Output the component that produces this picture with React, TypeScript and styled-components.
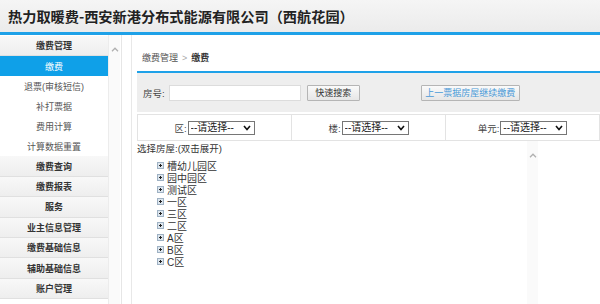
import styled, { createGlobalStyle } from 'styled-components'

const GlobalStyle = createGlobalStyle`
  html, body {
    margin: 0;
    padding: 0;
    background: #fff;
  }
  body {
    font-family: "Liberation Sans", "Noto Sans CJK SC", sans-serif;
    color: #333;
  }
`

const Page = styled.div`
  width: 600px;
  height: 304px;
  overflow: hidden;
  display: flex;
  flex-direction: column;
`

const TopBar = styled.header`
  height: 32px;
  flex: none;
  display: flex;
  align-items: center;
  padding-left: 8px;
  background: linear-gradient(#f5f5f5, #ebebeb);
  border-bottom: 3px solid #1ea1e8;
`

const Title = styled.h1`
  margin: 0;
  font-size: 14.2px;
  font-weight: bold;
  color: #222;
  font-family: "Noto Sans CJK SC", sans-serif;
`

const Body = styled.div`
  flex: 1;
  display: flex;
  min-height: 0;
`

const Side = styled.aside`
  width: 121px;
  flex: none;
  display: flex;
  border-right: 1px solid #e6e6e6;
`

const Menu = styled.nav`
  width: 108px;
  display: flex;
  flex-direction: column;
  padding-top: 1px;
  border-right: 1px solid #ececec;
`

const GroupHead = styled.div`
  height: 20.4px;
  flex: none;
  box-sizing: border-box;
  display: flex;
  align-items: center;
  justify-content: center;
  font-size: 9px;
  font-weight: bold;
  color: #333;
  background: linear-gradient(#f8f8f8, #eeeeee);
  border-bottom: 1px solid #e0e0e0;
`

const MenuItem = styled.div<{ $active?: boolean }>`
  height: 20px;
  flex: none;
  display: flex;
  align-items: center;
  justify-content: center;
  font-size: 9px;
  color: ${p => (p.$active ? '#fff' : '#555')};
  background: ${p => (p.$active ? '#0fa0e8' : '#fff')};
`

const Track = styled.div<{ $top: number }>`
  width: 11px;
  flex: none;
  background: #fafafa;
  display: flex;
  justify-content: center;
  padding-top: ${p => p.$top}px;
  box-sizing: border-box;
`

const Main = styled.main`
  flex: 1;
  min-width: 0;
  margin-left: 9px;
  border-left: 1px solid #e8e8e8;
  padding-left: 5px;
  display: flex;
  flex-direction: column;
`

const Crumb = styled.div`
  height: 36px;
  flex: none;
  display: flex;
  align-items: flex-end;
  padding: 0 0 7px 5px;
  box-sizing: border-box;
  font-size: 9px;
  line-height: 12px;
  color: #555;
  gap: 4px;
`

const CrumbSep = styled.span`
  color: #aaa;
`

const CrumbNow = styled.b`
  color: #333;
`

const BlueRule = styled.div`
  height: 2px;
  flex: none;
  background: #1ea1e8;
`

const SearchBar = styled.div`
  height: 39px;
  flex: none;
  display: flex;
  align-items: center;
  padding-left: 6px;
  background: #eeeeee;
  font-size: 9.5px;
  color: #444;
`

const TextInput = styled.input`
  width: 132px;
  height: 16px;
  box-sizing: border-box;
  margin-left: 4px;
  border: 1px solid #dcdcdc;
  background: #fff;
  padding: 0 3px;
  outline: none;
`

const Btn = styled.button<{ $w: number; $gap: number; $blue?: boolean }>`
  width: ${p => p.$w}px;
  height: 16px;
  margin-left: ${p => p.$gap}px;
  padding: 0;
  border: 1px solid #b5b5b5;
  border-radius: 1px;
  background: linear-gradient(#fafafa, #e6e6e6);
  font-family: inherit;
  font-size: 9px;
  color: ${p => (p.$blue ? '#4a9ad8' : '#333')};
`

const Filters = styled.div`
  height: 27px;
  flex: none;
  margin-top: 2px;
  display: grid;
  grid-template-columns: 154px 154px 1fr;
  border: 1px solid #e3e3e3;
  box-sizing: border-box;
`

const FilterCell = styled.div<{ $last?: boolean }>`
  display: flex;
  align-items: center;
  justify-content: center;
  gap: 1px;
  font-size: 9.5px;
  color: #444;
  border-right: ${p => (p.$last ? 'none' : '1px solid #e3e3e3')};
`

const SelectBox = styled.div`
  position: relative;
  width: 67px;
  height: 14px;
`

const Select = styled.select`
  appearance: none;
  width: 100%;
  height: 100%;
  box-sizing: border-box;
  border: 1px solid #767676;
  border-radius: 0;
  background: #fff;
  padding: 0 0 0 2px;
  font-family: inherit;
  font-size: 10px;
  line-height: 12px;
  color: #222;
`

const Caret = styled.svg`
  position: absolute;
  right: 4px;
  top: 4px;
  pointer-events: none;
`

const TreeArea = styled.div`
  flex: 1;
  min-height: 0;
  display: flex;
`

const TreePane = styled.div`
  width: 390px;
  flex: none;
  padding-top: 1px;
`

const Caption = styled.div`
  font-size: 9.5px;
  line-height: 14px;
  color: #333;
`

const TreeList = styled.ul`
  list-style: none;
  margin: 3px 0 0;
  padding: 0 0 0 20px;
`

const TreeNode = styled.li`
  height: 12px;
  display: flex;
  align-items: center;
  gap: 3px;
  font-size: 10px;
  color: #333;
`

const UpArrow = () => (
  <svg width="8" height="5" viewBox="0 0 8 5">
    <polyline points="1,4.2 4,1.2 7,4.2" fill="none" stroke="#b0b0b0" strokeWidth="1.3" />
  </svg>
)

const Expander = () => (
  <svg width="7" height="7" viewBox="0 0 7 7">
    <rect x="0.5" y="0.5" width="6" height="6" fill="#dde6ee" stroke="#9fb2c4" />
    <path d="M2 3.5h3M3.5 2v3" stroke="#222" strokeWidth="1" />
  </svg>
)

const Dropdown = () => (
  <SelectBox>
    <Select defaultValue="">
      <option value="">--请选择--</option>
    </Select>
    <Caret width="8" height="6" viewBox="0 0 8 6">
      <polyline points="1,1 4,4.5 7,1" fill="none" stroke="#111" strokeWidth="1.6" />
    </Caret>
  </SelectBox>
)

const groupsTop = ['缴费管理']
const payItems = ['缴费', '退票(审核短信)', '补打票据', '费用计算', '计算数据重置']
const groupsBottom = ['缴费查询', '缴费报表', '服务', '业主信息管理', '缴费基础信息', '辅助基础信息', '账户管理']
const areas = ['槽幼儿园区', '园中园区', '测试区', '一区', '三区', '二区', 'A区', 'B区', 'C区']

export default function App() {
  return (
    <Page>
      <GlobalStyle />
      <TopBar>
        <Title>热力取暖费-西安新港分布式能源有限公司（西航花园）</Title>
      </TopBar>
      <Body>
        <Side>
          <Menu>
            {groupsTop.map(g => (
              <GroupHead key={g}>{g}</GroupHead>
            ))}
            {payItems.map((item, i) => (
              <MenuItem key={item} $active={i === 0}>
                {item}
              </MenuItem>
            ))}
            {groupsBottom.map(g => (
              <GroupHead key={g}>{g}</GroupHead>
            ))}
          </Menu>
          <Track $top={12}>
            <UpArrow />
          </Track>
        </Side>
        <Main>
          <Crumb>
            <span>缴费管理</span>
            <CrumbSep>&gt;</CrumbSep>
            <CrumbNow>缴费</CrumbNow>
          </Crumb>
          <BlueRule />
          <SearchBar>
            <span>房号:</span>
            <TextInput />
            <Btn $w={53} $gap={6}>快速搜索</Btn>
            <Btn $w={99} $gap={61} $blue>上一票据房屋继续缴费</Btn>
          </SearchBar>
          <Filters>
            <FilterCell>
              <span>区:</span>
              <Dropdown />
            </FilterCell>
            <FilterCell>
              <span>楼:</span>
              <Dropdown />
            </FilterCell>
            <FilterCell $last>
              <span>单元:</span>
              <Dropdown />
            </FilterCell>
          </Filters>
          <TreeArea>
            <TreePane>
              <Caption>选择房屋:(双击展开)</Caption>
              <TreeList>
                {areas.map(a => (
                  <TreeNode key={a}>
                    <Expander />
                    <span>{a}</span>
                  </TreeNode>
                ))}
              </TreeList>
            </TreePane>
            <Track $top={12}>
              <UpArrow />
            </Track>
          </TreeArea>
        </Main>
      </Body>
    </Page>
  )
}
